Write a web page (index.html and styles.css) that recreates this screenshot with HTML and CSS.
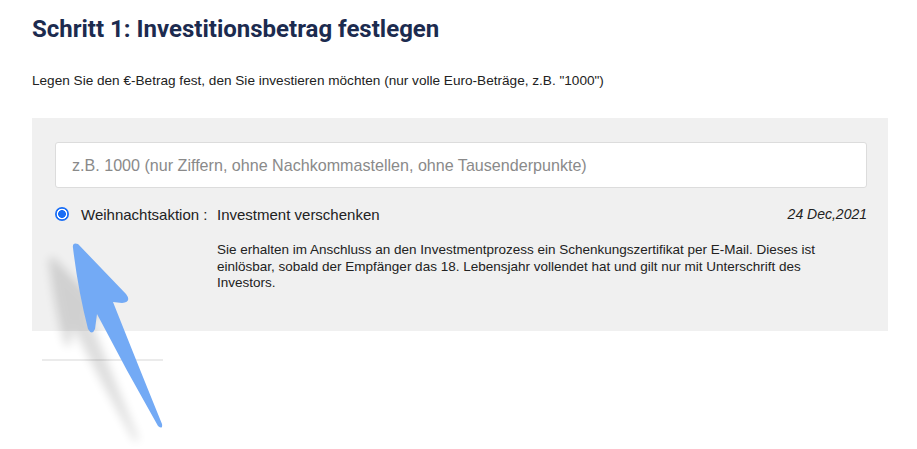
FILE: index.html
```html
<!DOCTYPE html>
<html lang="de">
<head>
<meta charset="utf-8">
<title>Schritt 1</title>
<link rel="stylesheet" href="styles.css">
</head>
<body>
<main class="page">
  <h1 class="title">Schritt 1: Investitionsbetrag festlegen</h1>
  <p class="lead">Legen Sie den €-Betrag fest, den Sie investieren möchten (nur volle Euro-Beträge, z.B. "1000")</p>
  <section class="panel">
    <div class="field">z.B. 1000 (nur Ziffern, ohne Nachkommastellen, ohne Tausenderpunkte)</div>
    <div class="option">
      <span class="radio"></span>
      <span class="label">Weihnachtsaktion :</span>
      <div class="detail">
        <div class="detail-head">
          <span class="name">Investment verschenken</span>
          <span class="date">24 Dec,2021</span>
        </div>
        <p class="desc">Sie erhalten im Anschluss an den Investmentprozess ein Schenkungszertifikat per E-Mail. Dieses ist<br>einlösbar, sobald der Empfänger das 18. Lebensjahr vollendet hat und gilt nur mit Unterschrift des<br>Investors.</p>
      </div>
    </div>
  </section>
  <div class="rule"></div>
</main>
<svg class="arrow" width="917" height="449" viewBox="0 0 917 449" xmlns="http://www.w3.org/2000/svg">
  <defs>
    <filter id="sh" x="-50%" y="-50%" width="200%" height="200%">
      <feGaussianBlur stdDeviation="5"/>
    </filter>
  </defs>
  <path d="M73 248 Q72 242 78 244 L126 294 Q132 302 122 303 L113 302 Q140 370 162 424 Q163 430 158 426 Q126 370 97 314 L95 329 Q92 336 88 329 Q78 290 73 248 Z" transform="translate(-24 14)" fill="#000" opacity="0.13" filter="url(#sh)"/>
  <path d="M73 248 Q72 242 78 244 L126 294 Q132 302 122 303 L113 302 Q140 370 162 424 Q163 430 158 426 Q126 370 97 314 L95 329 Q92 336 88 329 Q78 290 73 248 Z" fill="#73aaf5"/>
</svg>
</body>
</html>
```
FILE: styles.css
```css
html, body {
  margin: 0;
  background: #fff;
}
.page {
  padding: 14px 29px 0 32px;
  font-family: "Liberation Sans", Arial, sans-serif;
  color: #222;
}
.title {
  margin: 0;
  font-family: Roboto, "Liberation Sans", sans-serif;
  font-weight: 700;
  font-size: 24px;
  line-height: 30px;
  color: #1c2b4f;
}
.lead {
  margin: 28px 0 0;
  font-size: 13.6px;
  line-height: 17px;
  color: #222;
}
.panel {
  margin-top: 29px;
  width: 856px;
  height: 213px;
  box-sizing: border-box;
  padding: 24px 21px 0 23px;
  background: #f0f0f0;
}
.field {
  height: 46px;
  box-sizing: border-box;
  border: 1px solid #dcdcdc;
  border-radius: 3px;
  background: #fff;
  padding: 0 16px;
  display: flex;
  align-items: center;
  font-size: 16.1px;
  color: #8a8a8a;
}
.option {
  display: flex;
  align-items: flex-start;
  margin-top: 18px;
}
.radio {
  flex: none;
  width: 14px;
  height: 14px;
  margin-top: 1px;
  border-radius: 50%;
  background: radial-gradient(circle, #1a6ef5 0 3.6px, #fff 4.2px 5px, #1a6ef5 5.6px);
}
.label {
  margin-left: 12px;
  width: 136px;
  font-size: 15px;
  line-height: 17px;
  color: #222;
}
.detail {
  flex: 1;
}
.detail-head {
  display: flex;
  justify-content: space-between;
  font-size: 15px;
  line-height: 17px;
}
.date {
  font-style: italic;
  font-size: 14px;
}
.desc {
  margin: 19px 0 0;
  font-size: 13.5px;
  line-height: 16.5px;
  color: #222;
}
.rule {
  margin: 28px 0 0 10px;
  width: 121px;
  height: 2px;
  background: #ebebeb;
}
.arrow {
  position: absolute;
  left: 0;
  top: 0;
  pointer-events: none;
}
```
